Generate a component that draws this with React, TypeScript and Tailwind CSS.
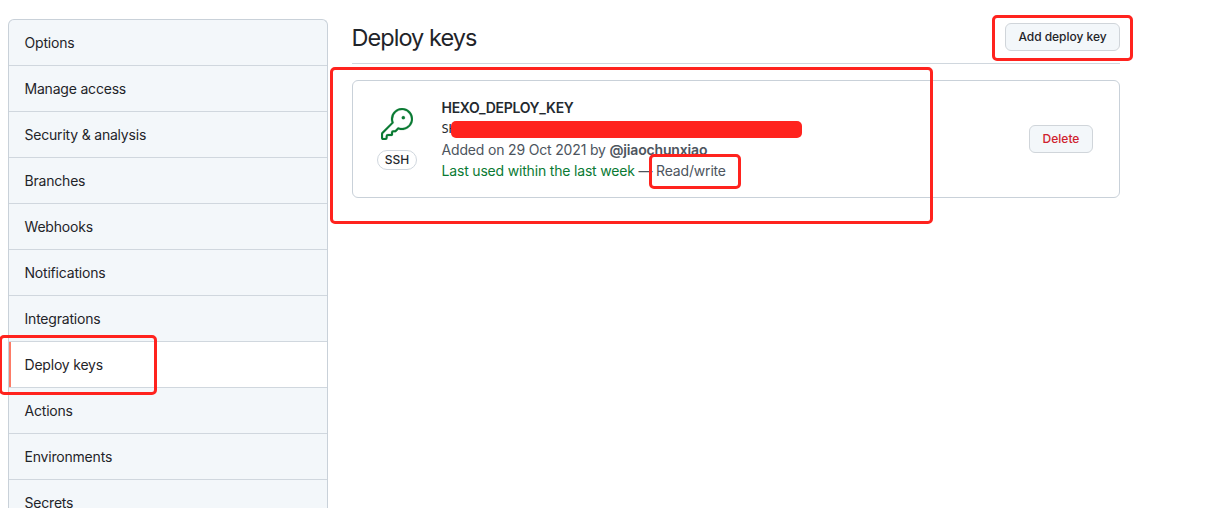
import React from "react";

const menuItems = [
  "Options",
  "Manage access",
  "Security & analysis",
  "Branches",
  "Webhooks",
  "Notifications",
  "Integrations",
  "Deploy keys",
  "Actions",
  "Environments",
  "Secrets",
];

function KeyIcon() {
  return (
    <svg width="32" height="32" viewBox="0 0 24 24" fill="currentColor" stroke="currentColor" strokeWidth="0.15" aria-hidden="true">
      <path d="M16.75 8.5a1.25 1.25 0 100-2.5 1.25 1.25 0 000 2.5z" />
      <path
        fillRule="evenodd"
        d="M15.75 0a8.25 8.25 0 00-7.851 10.79L.513 18.178A1.75 1.75 0 000 19.414v2.836C0 23.217.784 24 1.75 24h1.5A1.75 1.75 0 005 22.25v-1a.25.25 0 01.25-.25h2.735a.75.75 0 00.545-.22l.214-.213A.875.875 0 009 19.948V18.5a.25.25 0 01.25-.25h1.086c.464 0 .91-.184 1.237-.513l1.636-1.636A8.25 8.25 0 1015.75 0zM9 8.25a6.75 6.75 0 114.288 6.287.75.75 0 00-.804.168l-1.971 1.972a.25.25 0 01-.177.073H9.25A1.75 1.75 0 007.5 18.5v1H5.25a1.75 1.75 0 00-1.75 1.75v1a.25.25 0 01-.25.25h-1.5a.25.25 0 01-.25-.25v-2.836a.25.25 0 01.073-.177l7.722-7.721a.75.75 0 00.168-.804A6.73 6.73 0 019 8.25z"
      />
    </svg>
  );
}

function Sidebar() {
  return (
    <nav className="w-80 shrink-0 overflow-hidden rounded-t-md border border-b-0 border-[#c9d1d9] bg-[#f3f7fa]">
      {menuItems.map((item) => {
        const active = item === "Deploy keys";
        return (
          <a
            key={item}
            className={
              active
                ? "flex h-[46px] items-stretch border-b border-[#d0d7de] bg-white"
                : "flex h-[46px] items-stretch border-b border-[#d0d7de]"
            }
          >
            <span className={active ? "w-0.5 bg-[#fd7b66]" : "w-0.5"} />
            <span className="pl-[13.5px] pt-3 text-sm leading-[21px] tracking-[-0.2px]">{item}</span>
          </a>
        );
      })}
    </nav>
  );
}

function DeployKeyCard() {
  return (
    <section className="mt-4 flex h-[118px] items-center rounded-md border border-[#c9d1d9] pr-[26px]">
      <div className="ml-6 flex w-10 flex-col items-center pb-[1px] text-[#0a7a33]">
        <KeyIcon />
        <span className="mt-[10px] flex h-5 w-10 items-center justify-center rounded-full border border-[#d0d7de] text-xs font-medium text-[#24292f]">
          SSH
        </span>
      </div>
      <div className="ml-6 pl-[0.5px] text-sm leading-[21px] text-[#4d555e]">
        <div className="font-semibold tracking-[-0.28px] text-[#24292f]">HEXO_DEPLOY_KEY</div>
        <div className="relative h-[21px] font-[DejaVu_Sans_Mono,monospace] text-xs leading-[22px] text-[#24292f]">
          SH
          <span className="absolute left-[9.5px] top-[3px] h-[17px] w-[351px] rounded-[5px] bg-[#ff231e]" />
        </div>
        <div className="tracking-[-0.17px]">
          Added on 29 Oct 2021 by <strong className="font-semibold">@jiaochunxiao</strong>
        </div>
        <div className="tracking-[-0.18px]">
          <span className="text-[#0a7a33]">Last used within the last week</span> —{" "}
          <span className="relative">
            Read/write
            <span className="absolute -left-[7px] -top-[8px] h-[35px] w-[92px] rounded-[5px] border-3 border-[#ff231e]" />
          </span>
        </div>
      </div>
      <button className="ml-auto h-7 w-16 rounded-md border border-[#d0d5da] bg-[#f3f7fa] text-xs font-medium text-[#cf222e]">
        Delete
      </button>
    </section>
  );
}

export default function App() {
  return (
    <div className="relative flex h-[508px] w-full gap-6 overflow-hidden bg-white pl-2 pt-[19px] font-[Inter,sans-serif] text-[#1f2429]">
      <Sidebar />
      <main className="w-3xl">
        <header className="flex h-[45px] items-start justify-between border-b border-[#d0d7de]">
          <h1 className="-ml-[0.5px] pt-[1px] text-[23.5px] leading-9 tracking-[-0.95px]">Deploy keys</h1>
          <button className="mt-1 h-7 w-[115px] rounded-md border border-[#d0d5da] bg-[#f3f7fa] text-xs font-medium tracking-[-0.03px]">
            Add deploy key
          </button>
        </header>
        <DeployKeyCard />
      </main>
      <span className="absolute left-[992px] top-[15px] h-[46px] w-[141px] rounded-[5px] border-3 border-[#ff231e]" />
      <span className="absolute left-[330px] top-[67px] h-[157px] w-[603px] rounded-[5px] border-3 border-[#ff231e]" />
      <span className="absolute left-[-1px] top-[335px] h-[60px] w-[158px] rounded-[5px] border-3 border-[#ff231e]" />
    </div>
  );
}
